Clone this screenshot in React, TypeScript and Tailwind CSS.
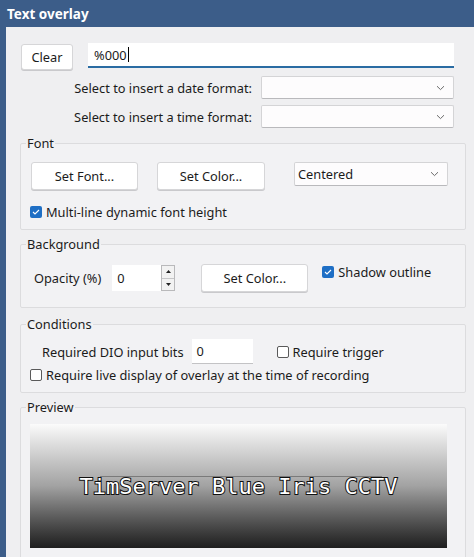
import React from "react";

const font = "font-['Noto_Sans','Open_Sans',sans-serif]";

function Btn({ label, className = "" }: { label: string; className?: string }) {
  return (
    <div
      className={`flex items-center justify-center rounded-[3px] border border-[#d6d6d8] bg-white text-[12.8px] leading-[16px] text-[#1b1b1b] shadow-[0_1px_0_#c9c9cc] ${className}`}
    >
      {label}
    </div>
  );
}

function Chevron() {
  return (
    <svg width="9" height="6" viewBox="0 0 9 6" className="shrink-0">
      <path d="M1 1.2 L4.5 4.6 L8 1.2" fill="none" stroke="#6a6a6a" strokeWidth="1" />
    </svg>
  );
}

function Select({ value = "", className = "" }: { value?: string; className?: string }) {
  return (
    <div
      className={`flex items-center justify-between rounded-[2px] border border-[#d4d4d6] border-b-[#b9b9bc] bg-[#fdfcfd] pl-[3px] pr-[8px] text-[12.8px] leading-[16px] text-[#1b1b1b] ${className}`}
    >
      <span>{value}</span>
      <Chevron />
    </div>
  );
}

function Check({ checked, label }: { checked?: boolean; label: string }) {
  return (
    <div className="flex items-center gap-[4px] text-[12.8px] leading-[16px] text-[#1b1b1b]">
      {checked ? (
        <span className="flex h-[12px] w-[12px] items-center justify-center rounded-[2px] bg-[#1f6fc5]">
          <svg width="8" height="6" viewBox="0 0 8 6">
            <path d="M1 3 L3 5 L7 1" fill="none" stroke="white" strokeWidth="1.1" />
          </svg>
        </span>
      ) : (
        <span className="h-[12px] w-[12px] rounded-[2px] border border-[#5a5a5a] bg-white" />
      )}
      <span>{label}</span>
    </div>
  );
}

function Group({
  title,
  className = "",
  children,
}: {
  title: string;
  className?: string;
  children: React.ReactNode;
}) {
  return (
    <fieldset className={`rounded-[2px] border border-[#dcdcde] bg-[#f2f2f4] ${className}`}>
      <legend className="ml-[5px] px-[1px] text-[12.8px] leading-[16px] text-[#1b1b1b]">{title}</legend>
      {children}
    </fieldset>
  );
}

export default function App() {
  return (
    <div className={`flex h-[557px] w-[474px] flex-col overflow-hidden bg-[#3c5d89] leading-[16px] ${font}`}>
      <div className="flex h-[27px] shrink-0 items-center px-[7px] text-[13.5px] font-bold text-white">
        Text overlay
      </div>
      <div className="ml-[6px] flex-1 bg-[#efeff1] pl-[14px] pr-[8px] pt-[16px]">
        <div className="flex items-start">
          <Btn label="Clear" className="ml-[1px] mt-[1px] h-[26px] w-[52px]" />
          <div className="ml-[15px] flex h-[25px] w-[366px] items-center border-b-2 border-[#2a6ca3] bg-white pl-[6px] text-[12.8px] text-[#1b1b1b]">
            %000
            <span className="ml-[1px] h-[15px] w-[1px] bg-black" />
          </div>
        </div>
        <div className="mt-[6px] flex items-center">
          <div className="w-[232px] text-right text-[12.8px] text-[#1b1b1b]">Select to insert a date format:</div>
          <Select className="ml-[9px] h-[23px] w-[193px]" />
        </div>
        <div className="mt-[6px] flex items-center">
          <div className="w-[232px] text-right text-[12.8px] text-[#1b1b1b]">Select to insert a time format:</div>
          <Select className="ml-[9px] h-[23px] w-[193px]" />
        </div>

        <Group title="Font" className="mt-[7px] h-[95px]">
          <div className="mt-[11px] flex items-start pl-[10px]">
            <Btn label="Set Font..." className="h-[28px] w-[107px]" />
            <Btn label="Set Color..." className="ml-[19px] h-[28px] w-[108px]" />
            <Select value="Centered" className="ml-[29px] h-[24px] w-[154px]" />
          </div>
          <div className="mt-[14px] pl-[9px]">
            <Check checked label="Multi-line dynamic font height" />
          </div>
        </Group>

        <Group title="Background" className="mt-[6px] h-[72px]">
          <div className="mt-[12px] flex items-center pl-[13px]">
            <span className="text-[12.8px] text-[#1b1b1b]">Opacity (%)</span>
            <div className="ml-[11px] flex h-[26px] w-[49px] items-center bg-white pl-[5px] text-[12.8px] text-[#1b1b1b]">
              0
            </div>
            <div className="flex h-[26px] w-[14px] flex-col border border-[#b9b9bb] bg-[#f2f2f2]">
              <div className="flex flex-1 items-center justify-center border-b border-[#c6c6c8]">
                <svg width="5" height="3" viewBox="0 0 5 3">
                  <path d="M0 3 L2.5 0 L5 3 Z" fill="#222" />
                </svg>
              </div>
              <div className="flex flex-1 items-center justify-center">
                <svg width="5" height="3" viewBox="0 0 5 3">
                  <path d="M0 0 L2.5 3 L5 0 Z" fill="#222" />
                </svg>
              </div>
            </div>
            <Btn label="Set Color..." className="ml-[26px] h-[28px] w-[107px]" />
            <div className="ml-[14px] self-start">
              <Check checked label="Shadow outline" />
            </div>
          </div>
        </Group>

        <Group title="Conditions" className="mt-[8px] h-[77px]">
          <div className="mt-[7px] flex items-center pl-[21px]">
            <span className="text-[12.8px] text-[#1b1b1b]">Required DIO input bits</span>
            <div className="ml-[8px] flex h-[25px] w-[61px] items-center border-b border-[#c3c3c5] bg-white pl-[5px] text-[12.8px] text-[#1b1b1b]">
              0
            </div>
            <div className="ml-[24px]">
              <Check label="Require trigger" />
            </div>
          </div>
          <div className="mt-[3px] pl-[9px]">
            <Check label="Require live display of overlay at the time of recording" />
          </div>
        </Group>

        <Group title="Preview" className="mt-[6px] h-[180px]">
          <div className="relative ml-[9px] mt-[9px] flex h-[124px] w-[417px] items-center justify-center bg-gradient-to-b from-[#fbfbfb] via-[#a2a2a2] to-[#1f1f1f]">
            <span className="absolute left-[70px] top-[52px] h-[1px] w-[282px] bg-[#7a7a7a]" />
            <span className="relative mt-[2px] font-['DejaVu_Sans_Mono',monospace] text-[22px] leading-[28px] text-white [-webkit-text-stroke:2px_#111] [paint-order:stroke_fill]">
              TimServer Blue Iris CCTV
            </span>
          </div>
        </Group>
      </div>
    </div>
  );
}
